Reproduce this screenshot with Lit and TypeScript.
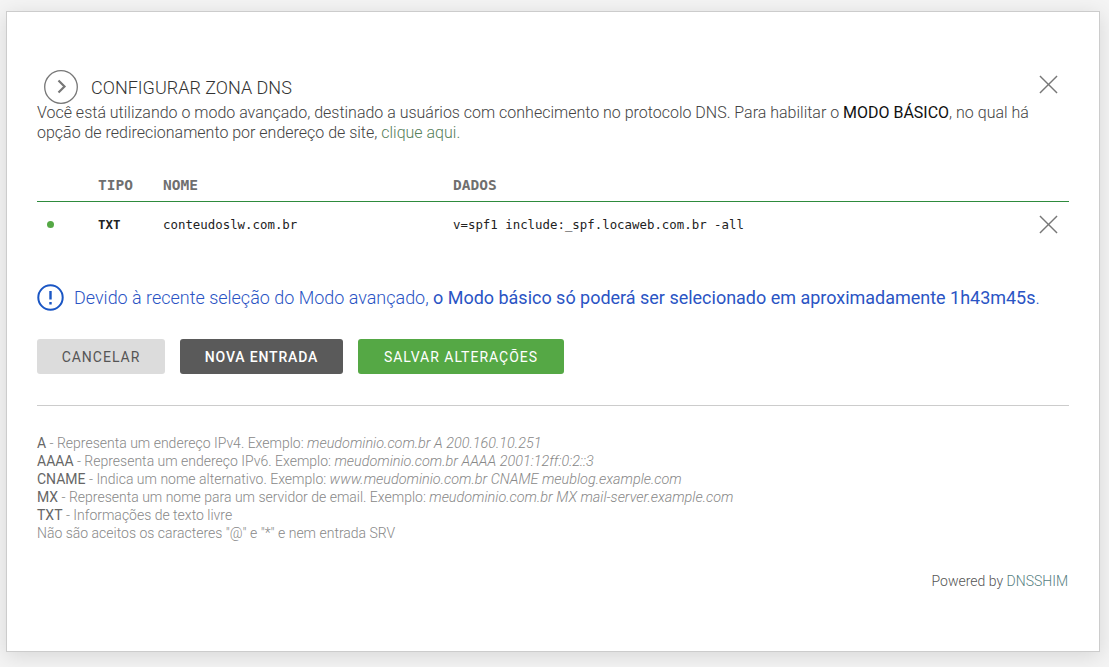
import { LitElement, html, css } from "lit";
import { customElement } from "lit/decorators.js";

const x = (size: number, color: string) => html`<svg width=${size} height=${size} viewBox="0 0 20 20" fill="none" stroke=${color} stroke-width="1.5"><path d="M1 1L19 19M19 1L1 19"></path></svg>`;

@customElement("app-root")
export class AppRoot extends LitElement {
  static styles = css`
    :host { display: block; height: 667px; overflow: hidden; background: #f4f4f4; font-family: Roboto, sans-serif; font-weight: 300; color: #444; }
    * { box-sizing: border-box; }
    .card { margin: 11px 0 0 6px; width: 1094px; height: 641px; background: #fff; border: 1px solid #ccc; box-shadow: 0 4px 20px rgba(0,0,0,.12); padding: 59px 30px 0 30px; display: flex; flex-direction: column; }
    .head { display: flex; align-items: center; height: 32px; padding-left: 7px; position: relative; }
    .chev { width: 34px; height: 34px; flex: none; }
    .title { font-size: 18px; margin-left: 13px; color: #333; }
    .close { position: absolute; right: 11px; top: 4px; display: flex; }
    p { margin: 0; }
    .intro { font-size: 15.99px; line-height: 20px; color: #444; }
    .intro b { font-weight: 400; color: #111; }
    .intro a { color: #56805a; }
    .table { margin-top: 26px; font-family: "DejaVu Sans Mono", monospace; }
    .row { display: grid; grid-template-columns: 61px 65px 290px 1fr 30px; align-items: center; }
    .th { height: 33px; border-bottom: 1px solid #2e8b3d; font-size: 14.5px; font-weight: 700; color: #6f6f6f; }
    .td { height: 44px; font-size: 12.4px; font-weight: 400; color: #222; }
    .td .type { font-weight: 700; font-size: 12.4px; }
    .dot { width: 7px; height: 7px; border-radius: 50%; background: #55a845; margin-left: 10px; }
    .rm { display: flex; }
    .alert { display: flex; align-items: center; margin-top: 37px; height: 28px; font-size: 17.98px; font-weight: 300; color: #2a54c4; }
    .alert svg { flex: none; margin-right: 10px; }
    .alert span b { font-weight: 400; }
    .btns { display: flex; gap: 15px; margin-top: 28px; }
    button { height: 35px; border: 0; border-radius: 3px; font: 400 14px Roboto, sans-serif; letter-spacing: 1px; padding: 0; }
    .b1 { width: 128px; background: #dcdcdc; color: #555; }
    .b2 { width: 163px; background: #5a5a5a; color: #fff; font-weight: 500; letter-spacing: .85px; }
    .b3 { width: 206px; background: #55a845; color: #fff; }
    hr { border: 0; border-top: 1px solid #ccc; margin: 31px 0 0; }
    .help { margin-top: 28px; font-size: 14px; line-height: 18px; color: #888; }
    .help div { height: 18px; }
    .help b { font-weight: 400; color: #666; }
    .help i { font-size: 14.4px; line-height: 0; }
    .foot { margin-top: 31px; padding-right: 1px; text-align: right; font-size: 14px; color: #555; }
    .foot a { color: #56807f; }
  `;
  render() {
    return html`<div class="card">
      <div class="head">
        <svg class="chev" viewBox="0 0 34 34" fill="none"><circle cx="17" cy="17" r="16.3" stroke="#777" stroke-width="1.3"></circle><path d="M14.5 10.5L20.5 16.5L14.5 22.5" stroke="#777" stroke-width="2.2"></path></svg>
        <span class="title">CONFIGURAR ZONA DNS</span>
        <span class="close">${x(19, "#777")}</span>
      </div>
      <p class="intro">Você está utilizando o modo avançado, destinado a usuários com conhecimento no protocolo DNS. Para habilitar o <b>MODO BÁSICO</b>, no qual há opção de redirecionamento por endereço de site, <a>clique aqui.</a></p>
      <div class="table">
        <div class="row th"><span></span><span>TIPO</span><span>NOME</span><span>DADOS</span><span></span></div>
        <div class="row td"><span class="dot"></span><span class="type">TXT</span><span>conteudoslw.com.br</span><span>v=spf1 include:_spf.locaweb.com.br -all</span><span class="rm">${x(19, "#777")}</span></div>
      </div>
      <div class="alert">
        <svg width="27" height="27" viewBox="0 0 27 27" fill="none"><circle cx="13.5" cy="13.5" r="12.2" stroke="#1a56c4" stroke-width="2"></circle><path d="M13.5 7V15.5M13.5 18V20.5" stroke="#1a56c4" stroke-width="2.4"></path></svg>
        <span>Devido à recente seleção do Modo avançado, <b>o Modo básico só poderá ser selecionado em aproximadamente 1h43m45s</b>.</span>
      </div>
      <div class="btns"><button class="b1">CANCELAR</button><button class="b2">NOVA ENTRADA</button><button class="b3">SALVAR ALTERAÇÕES</button></div>
      <hr />
      <div class="help">
        <div><b>A</b> - Representa um endereço IPv4. Exemplo: <i>meudominio.com.br A 200.160.10.251</i></div>
        <div><b>AAAA</b> - Representa um endereço IPv6. Exemplo: <i>meudominio.com.br AAAA 2001:12ff:0:2::3</i></div>
        <div><b>CNAME</b> - Indica um nome alternativo. Exemplo: <i>www.meudominio.com.br CNAME meublog.example.com</i></div>
        <div><b>MX</b> - Representa um nome para um servidor de email. Exemplo: <i>meudominio.com.br MX mail-server.example.com</i></div>
        <div><b>TXT</b> - Informações de texto livre</div>
        <div>Não são aceitos os caracteres "@" e "*" e nem entrada SRV</div>
      </div>
      <div class="foot">Powered by <a>DNSSHIM</a></div>
    </div>`;
  }
}
